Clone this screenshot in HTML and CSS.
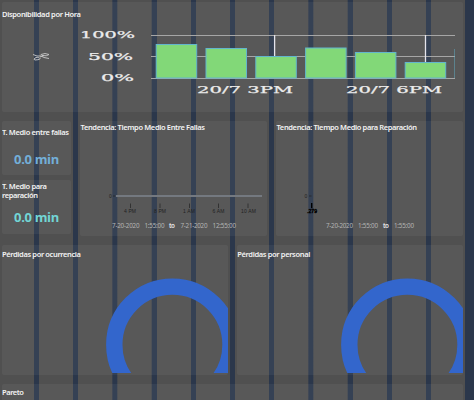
FILE: index.html
```html
<!DOCTYPE html>
<html lang="es">
<head>
<meta charset="utf-8">
<title>Disponibilidad</title>
<link rel="stylesheet" href="styles.css">
</head>
<body>
<main class="dashboard">
  <section class="card hourly">
    <h2 class="title"><svg class="label" viewBox="0 0 461 14"><text x="0" y="9" textLength="79">Disponibilidad por Hora</text></svg></h2>
    <svg class="bars" viewBox="2 24 461 80">
      <g class="grid-line"><path d="M151 35.5H455M151 56.5H455M151 78.5H455"/></g>
      <g class="bar">
        <rect x="156.200" y="44.500" width="40.500" height="33.500"/>
        <rect x="206" y="48.500" width="40.500" height="29.500"/>
        <rect x="255.800" y="56.500" width="40.500" height="21.500"/>
        <rect x="305.600" y="48" width="40.500" height="30"/>
        <rect x="355.400" y="52.500" width="40.500" height="25.500"/>
        <rect x="405.200" y="62.500" width="40.500" height="15.500"/>
        <path class="edge" d="M454.500 49V78"/>
      </g>
      <path class="whisker" d="M274.600 35V56M425.500 35V62"/>
      <g class="axis">
        <text x="80" y="38" textLength="55" lengthAdjust="spacingAndGlyphs">100%</text>
        <text x="88" y="60" textLength="45" lengthAdjust="spacingAndGlyphs">50%</text>
        <text x="101" y="81" textLength="33" lengthAdjust="spacingAndGlyphs">0%</text>
        <text x="197" y="93" textLength="96" lengthAdjust="spacingAndGlyphs">20/7 3PM</text>
        <text x="346" y="93" textLength="96" lengthAdjust="spacingAndGlyphs">20/7 6PM</text>
      </g>
      <path class="unit" d="M33 54.500L37 56H41L44 57.500L49 58.500M35 58Q37 56.500 39.500 58T35 60Q33 59.500 35 58M40 57L44 55.500M41 54.500Q45 52.500 49 54.500Q47 56.500 42 55.500Z"/>
    </svg>
  </section>

  <div class="row middle">
    <div class="kpis">
      <section class="card kpi">
        <h2 class="title"><svg class="label" viewBox="0 0 69 16"><text x="0" y="10.500" textLength="67">T. Medio entre fallas</text></svg></h2>
        <p class="value blue">0.0 min</p>
      </section>
      <section class="card kpi">
        <h2 class="title"><svg class="label" viewBox="0 0 69 23"><text x="0" y="9" textLength="45">T. Medio para</text><text x="0" y="18" textLength="36">reparación</text></svg></h2>
        <p class="value teal">0.0 min</p>
      </section>
    </div>
    <section class="card">
      <svg class="trend" viewBox="80 121 187 115">
        <text class="label" x="80.500" y="130" textLength="124.500">Tendencia: Tiempo Medio Entre Fallas</text>
        <text class="tick" x="109" y="198">0</text>
        <path class="notch" d="M113 196H115"/>
        <path class="zero" d="M116 196H262"/>
        <path class="notch" d="M130.500 203.500V208M160 203.500V208M189.500 203.500V208M218.500 203.500V208M248 203.500V208"/>
        <g class="tick">
          <text x="124" y="213" textLength="12">4 PM</text><text x="154" y="213" textLength="12">8 PM</text><text x="183" y="213" textLength="12">1 AM</text><text x="212.500" y="213" textLength="12">6 AM</text><text x="241" y="213" textLength="15">10 AM</text>
        </g>
        <g class="range">
          <text x="112" y="228" textLength="27.500">7-20-2020</text><text x="144.500" y="228" textLength="20">1:55:00</text><text class="to" x="169" y="228" textLength="6">to</text><text x="180.500" y="228" textLength="27">7-21-2020</text><text x="212.500" y="228" textLength="23.500">12:55:00</text>
        </g>
      </svg>
    </section>
    <section class="card">
      <svg class="trend" viewBox="276 121 187 115">
        <text class="label" x="276.500" y="130" textLength="140.500">Tendencia: Tiempo Medio para Reparación</text>
        <text class="tick" x="304.500" y="198">0</text>
        <path class="notch" d="M309 196H311.500"/>
        <path class="notch strong" d="M311.700 203V208"/>
        <text class="tick strong" x="307" y="213" textLength="10">.279</text>
        <g class="range">
          <text x="326" y="228" textLength="27">7-20-2020</text><text x="358" y="228" textLength="20">1:55:00</text><text class="to" x="383" y="228" textLength="6">to</text><text x="394" y="228" textLength="20">1:55:00</text>
        </g>
      </svg>
    </section>
  </div>

  <div class="row losses">
    <section class="card">
      <svg class="pie" viewBox="2 245 226 130">
        <text class="label" x="2" y="257" textLength="79">Pérdidas por ocurrencia</text>
        <svg x="2" y="245" width="226" height="128"><circle class="ring" cx="170.400" cy="99.700" r="58.100"/></svg>
      </svg>
    </section>
    <section class="card">
      <svg class="pie" viewBox="237 245 226 130">
        <text class="label" x="237.300" y="257" textLength="73">Pérdidas por personal</text>
        <svg x="237" y="245" width="226" height="128"><circle class="ring" cx="170.400" cy="99.700" r="58.100"/></svg>
      </svg>
    </section>
  </div>

  <section class="card pareto">
    <h2 class="title"><svg class="label" viewBox="0 0 461 16"><text x="0" y="11" textLength="22">Pareto</text></svg></h2>
  </section>
</main>
</body>
</html>
```
FILE: styles.css
```css
* { box-sizing: border-box; }
body {
  margin: 0;
  height: 400px;
  overflow: hidden;
  font-family: "Noto Sans", "Open Sans", sans-serif;
  background: linear-gradient(90deg, transparent 465.200px, #2b374b 465.200px),
    repeating-linear-gradient(90deg, #505050 0 33.700px, #2b374b 34.300px 38.900px, #505050 39.200px);
}
.dashboard {
  display: flex;
  flex-direction: column;
  gap: 9px;
  width: 463px;
  height: 400px;
  padding: 2px 0 0 2px;
}
.card {
  overflow: hidden;
  border-radius: 2px;
  background: rgba(255, 255, 255, .05);
}
svg { display: block; width: 100%; }
.title { margin: 0; }
.label {
  fill: #f2f2f2;
  font-size: 7.500px;
  font-weight: 600;
}
.hourly { flex: none; height: 110px; padding-top: 6px; }
.hourly .title { height: 16px; }
.grid-line { fill: none; stroke: #a6a6a6; stroke-width: 1; }
.bar { fill: #82d878; stroke: #62b5cd; stroke-width: 1; }
.edge { opacity: .45; }
.whisker { stroke: #e4e4ec; stroke-width: 1.300; }
.axis {
  fill: #ececec;
  stroke: #ececec;
  stroke-width: .250;
  font-family: "DejaVu Serif", serif;
  font-size: 9.800px;
}
.unit { fill: none; stroke: #c8c8c8; stroke-width: .900; }
.row { display: grid; flex: none; }
.middle {
  grid-template-columns: 69px 187px 187px;
  gap: 9px;
  height: 115px;
}
.kpis { display: grid; grid-template-rows: 54px 54px; gap: 5px; }
.kpi:first-child { padding-top: 3px; }
.value {
  margin: 0;
  font-family: "Open Sans", sans-serif;
  font-size: 13px;
  font-weight: 700;
  line-height: 18px;
  letter-spacing: -.350px;
  text-align: center;
}
.kpi:first-child .value { padding-top: 10px; }
.kpi:last-child .value { padding-top: 5px; }
.blue { color: #73afd8; }
.teal { color: #72d5d5; }
.tick { fill: #222; font-family: "Liberation Sans", sans-serif; font-size: 5px; }
.notch { fill: none; stroke: #222; stroke-width: .700; }
.zero { stroke: #747980; stroke-width: 1.800; }
.strong { fill: #000; stroke: #000; stroke-width: .400; }
.notch.strong { stroke-width: 1.400; }
.range { fill: #b4b4b4; font-size: 6.300px; }
.to { fill: #e8e8e8; font-weight: 600; }
.losses { grid-template-columns: 226px 226px; gap: 9px; height: 130px; }
.ring { fill: none; stroke: #3366cc; stroke-width: 16.400; }
.pareto { flex: 1; min-height: 0; border-radius: 2px 2px 0 0; }
```
